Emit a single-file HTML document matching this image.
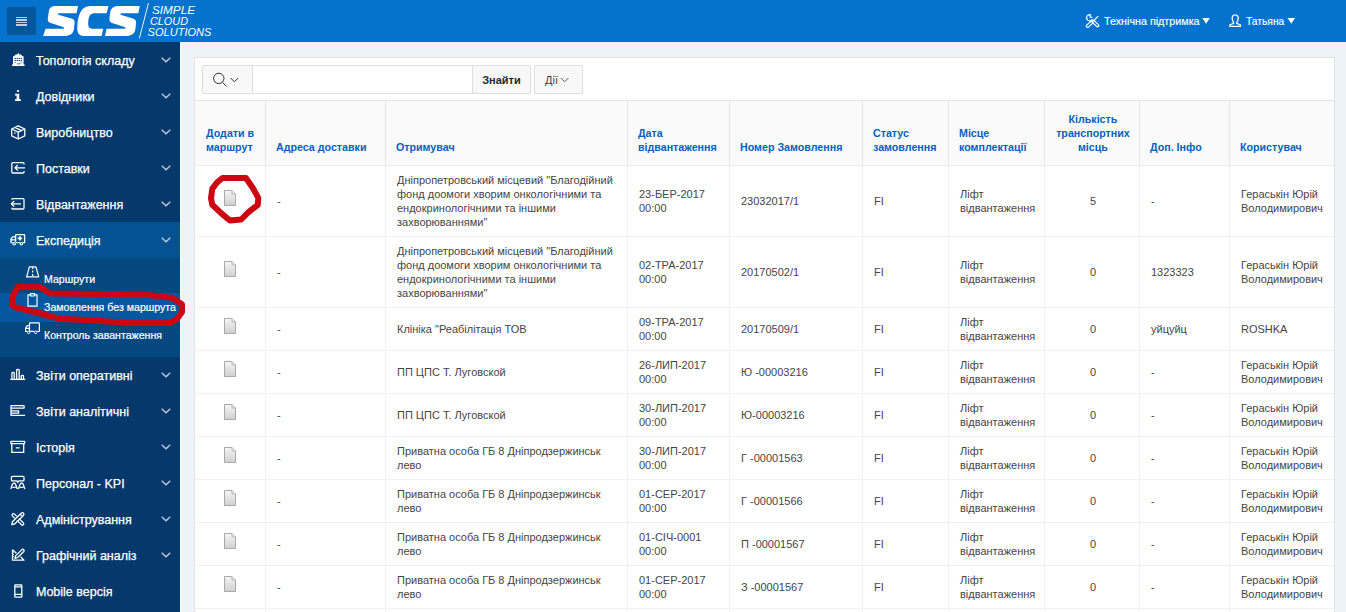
<!DOCTYPE html>
<html><head><meta charset="utf-8">
<style>
*{box-sizing:border-box;margin:0;padding:0}
html,body{width:1346px;height:612px;overflow:hidden;background:#eef3f8;font-family:"Liberation Sans",sans-serif;color:#404040}
#hdr{z-index:2;position:absolute;left:0;top:0;width:1346px;height:42px;background:#0572ce}
#burger{position:absolute;left:7px;top:7px;width:29px;height:28px;background:#04569f;border-radius:2px}
#burger i{position:absolute;left:9px;width:11px;height:1.5px;background:#bccfe3}
#logo{position:absolute;left:0;top:0}
.sx{display:inline-block;transform-origin:0 50%}
.tnav{position:absolute;top:0;height:42px;line-height:42px;color:#fff;font-size:11px;white-space:nowrap;-webkit-text-stroke:0.15px #fff}
#nav{position:absolute;left:0;top:0;width:180px;height:612px;background:#05386b}
#navline{position:absolute;left:180px;top:42px;width:1px;height:570px;background:#fafcfe}
.ni{position:absolute;left:0;width:180px;height:36px;color:#fff;font-size:12.5px;line-height:36px}
.ni .t{position:absolute;left:36px;top:1px;-webkit-text-stroke:0.25px #fff}
.ni svg.ic{position:absolute}
.chev{position:absolute;left:161px;top:15px}
#sub{position:absolute;left:0;top:258px;width:180px;height:99px;background:#04487f}
.si{position:absolute;left:0;width:180px;height:28px;color:#fff;font-size:11px}
.si .t{position:absolute;left:44px;top:7px;line-height:14px;font-size:10.6px;-webkit-text-stroke:0.2px #fff}
#card{position:absolute;left:194px;top:57px;width:1141px;height:560px;background:#fff;border:1px solid #e2e2e2}
.btn{position:absolute;top:7px;height:29px;background:#f8f8f8;border:1px solid #dedede}
table{position:absolute;left:0;top:42px;border-collapse:separate;border-spacing:0;table-layout:fixed;width:1139px}
th,td{border-right:1px solid #f0f0f0;border-bottom:1px solid #f0f0f0;vertical-align:middle;text-align:left;font-size:11px;line-height:14px;padding:0 10px}
th{border-right-color:#e6e6e6;border-bottom-color:#ebebeb;background:#fafafa;color:#0560c2;font-weight:bold;vertical-align:bottom;padding-bottom:11px;border-top:1px solid #e4e4e4}
td{color:#454545;padding-left:11px;padding-right:9px}
tr.r4 td{height:71px}
tr.r2 td{height:43px}
td.doc{text-align:center;padding:0}
tr > :last-child{border-right:none}
.h{display:inline-block;transform:scaleX(0.97);transform-origin:0 100%;white-space:nowrap}
th[style*="center"] .h{transform-origin:50% 100%}
.dic{display:inline-block;vertical-align:middle;margin-top:-5px;position:relative;top:-2px}
td{white-space:nowrap}
</style></head><body>
<div id="hdr">
  <div id="burger"><i style="top:9.5px"></i><i style="top:12px"></i><i style="top:14.5px"></i><i style="top:17px"></i></div>
  <svg id="logo" width="1346" height="42" viewBox="0 0 1346 42">
    <path fill="#fff" d="M54.3,6 L78,6 L76.6,13.2 L58.8,13.2 Q57.4,13.6 58.2,14.7 L72.3,18.8 Q75,20 74.6,23 L73.9,29.3 Q73.2,33.8 69.4,35 Q67.2,35.9 64.8,35.9 L43.1,35.9 L45.6,28.7 L63,28.7 Q64.5,28.3 63.8,27.2 L49.9,22.8 Q47.4,21.6 47.8,18.6 L48.7,11.9 Q49.4,7.6 52.4,6.6 Q53.4,6 54.3,6 Z"/>
    <path fill="#fff" d="M90.8,6 L108.5,6 L106.6,13.2 L94.5,13.2 C90.8,13.2 88.9,15.5 88.3,21 C87.8,26.5 89,28.7 92,28.7 L103.2,28.7 L101.6,35.9 L83.9,35.9 C78.6,35.9 76.9,32.5 77.3,26 C77.8,19 79.2,12.5 83,8.8 C85.2,6.8 87.6,6 90.8,6 Z"/>
    <path fill="#fff" d="M117.5,6 L139.8,6 L138.3,13.2 L121.4,13.2 Q119.9,13.7 120.6,14.7 L133.6,18.8 Q136.5,20.2 136.1,23.3 L135.2,30 Q134.5,33.8 131.1,34.9 Q128.8,35.9 126.2,35.9 L105,35.9 L106.6,28.7 L124.3,28.7 Q126,28.3 125.4,27.2 L111.3,22.8 Q109,21.6 109.4,18.6 L110.3,11.9 Q111,8 114.4,6.8 Q116,6 117.5,6 Z"/>
    <line x1="148.5" y1="3" x2="139.3" y2="38.5" stroke="#fff" stroke-width="0.9"/>
    <text x="152" y="14" font-family="Liberation Sans" font-style="italic" font-size="11" fill="#fff" textLength="43" lengthAdjust="spacingAndGlyphs">SIMPLE</text>
    <text x="150" y="25" font-family="Liberation Sans" font-style="italic" font-size="11" fill="#fff" textLength="38" lengthAdjust="spacingAndGlyphs">CLOUD</text>
    <text x="147.5" y="36" font-family="Liberation Sans" font-style="italic" font-size="11" fill="#fff" textLength="64" lengthAdjust="spacingAndGlyphs">SOLUTIONS</text>
    <g fill="none" stroke="#fff" stroke-width="1.2">
      <path d="M1098.2,16.2 L1093.6,20.8"/>
      <rect x="1085.6" y="22.85" width="8.2" height="2.6" rx="1.2" transform="rotate(-43 1089.7 24.15)"/>
      <rect x="1090.7" y="22.1" width="9" height="2.5" rx="1.25" transform="rotate(42 1095.2 23.35)"/>
      <path d="M1091.2,15.2 A3,3 0 1 0 1091.9,19.6"/>
      <path d="M1089.3,14.6 L1090.4,17.2 L1092.3,17.4"/>
    </g>
    <path fill="#fff" d="M1202.4,18 L1209.8,18 L1206.1,23.8 Z"/>
    <g fill="none" stroke="#fff" stroke-width="1.3">
      <path d="M1235.2,14.8 C1232.6,14.8 1232,17 1232.2,18.8 C1232.4,20.6 1233.2,21.8 1233.6,22.6 L1233.6,23.4 L1229.9,25 L1229.9,26.4 L1240.4,26.4 L1240.4,25 L1236.7,23.4 L1236.7,22.6 C1237.2,21.8 1238,20.6 1238.2,18.8 C1238.4,17 1237.8,14.8 1235.2,14.8 Z"/>
    </g>
    <path fill="#fff" d="M1287.5,18 L1295.1,18 L1291.3,23.8 Z"/>
  </svg>
  <div class="tnav" style="left:1103.5px"><span class="sx" style="transform:scaleX(0.977)">Технічна підтримка</span></div>
  <div class="tnav" style="left:1245.8px"><span class="sx" style="transform:scaleX(0.934)">Татьяна</span></div>
</div>

<div id="nav">
<div style="position:absolute;left:0;top:222px;width:180px;height:36px;background:#045292"></div>
<div id="sub"></div>
<div style="position:absolute;left:0;top:293px;width:180px;height:29px;background:#0558a0"></div>
<div class="ni" style="top:42px"><span class="t">Топологія складу</span><svg class="chev" width="10" height="6" viewBox="0 0 10 6"><polyline points="0.7,0.7 5,4.8 9.3,0.7" fill="none" stroke="#c3cfdc" stroke-width="1.3"/></svg></div>
<div class="ni" style="top:78px"><span class="t">Довідники</span><svg class="chev" width="10" height="6" viewBox="0 0 10 6"><polyline points="0.7,0.7 5,4.8 9.3,0.7" fill="none" stroke="#c3cfdc" stroke-width="1.3"/></svg></div>
<div class="ni" style="top:114px"><span class="t">Виробництво</span><svg class="chev" width="10" height="6" viewBox="0 0 10 6"><polyline points="0.7,0.7 5,4.8 9.3,0.7" fill="none" stroke="#c3cfdc" stroke-width="1.3"/></svg></div>
<div class="ni" style="top:150px"><span class="t">Поставки</span><svg class="chev" width="10" height="6" viewBox="0 0 10 6"><polyline points="0.7,0.7 5,4.8 9.3,0.7" fill="none" stroke="#c3cfdc" stroke-width="1.3"/></svg></div>
<div class="ni" style="top:186px"><span class="t">Відвантаження</span><svg class="chev" width="10" height="6" viewBox="0 0 10 6"><polyline points="0.7,0.7 5,4.8 9.3,0.7" fill="none" stroke="#c3cfdc" stroke-width="1.3"/></svg></div>
<div class="ni" style="top:222px"><span class="t">Експедиція</span><svg class="chev" width="10" height="6" viewBox="0 0 10 6"><polyline points="0.7,0.7 5,4.8 9.3,0.7" fill="none" stroke="#c3cfdc" stroke-width="1.3"/></svg></div>
<div class="ni" style="top:357px"><span class="t">Звіти оперативні</span><svg class="chev" width="10" height="6" viewBox="0 0 10 6"><polyline points="0.7,0.7 5,4.8 9.3,0.7" fill="none" stroke="#c3cfdc" stroke-width="1.3"/></svg></div>
<div class="ni" style="top:393px"><span class="t">Звіти аналітичні</span><svg class="chev" width="10" height="6" viewBox="0 0 10 6"><polyline points="0.7,0.7 5,4.8 9.3,0.7" fill="none" stroke="#c3cfdc" stroke-width="1.3"/></svg></div>
<div class="ni" style="top:429px"><span class="t">Історія</span><svg class="chev" width="10" height="6" viewBox="0 0 10 6"><polyline points="0.7,0.7 5,4.8 9.3,0.7" fill="none" stroke="#c3cfdc" stroke-width="1.3"/></svg></div>
<div class="ni" style="top:465px"><span class="t">Персонал - KPI</span><svg class="chev" width="10" height="6" viewBox="0 0 10 6"><polyline points="0.7,0.7 5,4.8 9.3,0.7" fill="none" stroke="#c3cfdc" stroke-width="1.3"/></svg></div>
<div class="ni" style="top:501px"><span class="t">Адміністрування</span><svg class="chev" width="10" height="6" viewBox="0 0 10 6"><polyline points="0.7,0.7 5,4.8 9.3,0.7" fill="none" stroke="#c3cfdc" stroke-width="1.3"/></svg></div>
<div class="ni" style="top:537px"><span class="t">Графічний аналіз</span><svg class="chev" width="10" height="6" viewBox="0 0 10 6"><polyline points="0.7,0.7 5,4.8 9.3,0.7" fill="none" stroke="#c3cfdc" stroke-width="1.3"/></svg></div>
<div class="ni" style="top:573px"><span class="t">Mobile версія</span></div>
<div class="si" style="top:265px"><span class="t">Маршрути</span></div>
<div class="si" style="top:293px"><span class="t">Замовлення без маршрута</span></div>
<div class="si" style="top:321px"><span class="t">Контроль завантаження</span></div>
</div>
<div id="navline"></div>

<div id="card">
  <div class="btn" style="left:7px;width:51px;border-radius:2px 0 0 2px"></div>
  <div class="btn" style="left:58px;width:220px;background:#fff;border-left:none"></div>
  <div class="btn" style="left:277px;width:59px;border-radius:0 2px 2px 0;font-weight:bold;font-size:11px;color:#262626;line-height:28px;text-align:center">Знайти</div>
  <div class="btn" style="left:339px;width:49px;border-radius:2px;font-size:11px;color:#404040;line-height:28px;padding-left:10px">Дії</div>
  <table>
    <colgroup><col style="width:71px"><col style="width:120px"><col style="width:242px"><col style="width:102px"><col style="width:133px"><col style="width:86px"><col style="width:96px"><col style="width:95px"><col style="width:90px"><col style="width:104px"></colgroup>
    <tr style="height:66px"><th style="padding-left:11px"><span class="h">Додати&nbsp;в<br>маршрут</span></th><th><span class="h">Адреса доставки</span></th><th><span class="h">Отримувач</span></th><th><span class="h">Дата<br>відвантаження</span></th><th><span class="h">Номер Замовлення</span></th><th><span class="h">Статус<br>замовлення</span></th><th><span class="h">Місце<br>комплектації</span></th><th style="text-align:center"><span class="h">Кількість<br>транспортних<br>місць</span></th><th><span class="h">Доп. Інфо</span></th><th><span class="h">Користувач</span></th></tr>
<tr class="r4"><td class="doc"><svg width="12" height="16" viewBox="0 0 12 16" class="dic"><defs><linearGradient id="dg" x1="0" y1="0" x2="0" y2="1"><stop offset="0" stop-color="#f6f6f6"/><stop offset="1" stop-color="#cfcfcf"/></linearGradient></defs><path d="M0.5,0.5 H8 L11.5,4 V15.5 H0.5 Z" fill="url(#dg)" stroke="#a9a9a9"/><path d="M8,0.5 V4 H11.5" fill="#e8e8e8" stroke="#b5b5b5"/></svg></td><td>-</td><td>Дніпропетровський місцевий "Благодійний<br>фонд доомоги хворим онкологічними та<br>ендокринологічними та іншими<br>захворюваннями"</td><td>23-БЕР-2017<br>00:00</td><td>23032017/1</td><td>FI</td><td>Ліфт<br>відвантаження</td><td style="text-align:center">5</td><td>-</td><td>Гераськін Юрій<br>Володимирович</td></tr>
<tr class="r4"><td class="doc"><svg width="12" height="16" viewBox="0 0 12 16" class="dic"><defs><linearGradient id="dg" x1="0" y1="0" x2="0" y2="1"><stop offset="0" stop-color="#f6f6f6"/><stop offset="1" stop-color="#cfcfcf"/></linearGradient></defs><path d="M0.5,0.5 H8 L11.5,4 V15.5 H0.5 Z" fill="url(#dg)" stroke="#a9a9a9"/><path d="M8,0.5 V4 H11.5" fill="#e8e8e8" stroke="#b5b5b5"/></svg></td><td>-</td><td>Дніпропетровський місцевий "Благодійний<br>фонд доомоги хворим онкологічними та<br>ендокринологічними та іншими<br>захворюваннями"</td><td>02-ТРА-2017<br>00:00</td><td>20170502/1</td><td>FI</td><td>Ліфт<br>відвантаження</td><td style="text-align:center">0</td><td>1323323</td><td>Гераськін Юрій<br>Володимирович</td></tr>
<tr class="r2"><td class="doc"><svg width="12" height="16" viewBox="0 0 12 16" class="dic"><defs><linearGradient id="dg" x1="0" y1="0" x2="0" y2="1"><stop offset="0" stop-color="#f6f6f6"/><stop offset="1" stop-color="#cfcfcf"/></linearGradient></defs><path d="M0.5,0.5 H8 L11.5,4 V15.5 H0.5 Z" fill="url(#dg)" stroke="#a9a9a9"/><path d="M8,0.5 V4 H11.5" fill="#e8e8e8" stroke="#b5b5b5"/></svg></td><td>-</td><td>Клініка "Реабілітація ТОВ</td><td>09-ТРА-2017<br>00:00</td><td>20170509/1</td><td>FI</td><td>Ліфт<br>відвантаження</td><td style="text-align:center">0</td><td>уйцуйц</td><td>ROSHKA</td></tr>
<tr class="r2"><td class="doc"><svg width="12" height="16" viewBox="0 0 12 16" class="dic"><defs><linearGradient id="dg" x1="0" y1="0" x2="0" y2="1"><stop offset="0" stop-color="#f6f6f6"/><stop offset="1" stop-color="#cfcfcf"/></linearGradient></defs><path d="M0.5,0.5 H8 L11.5,4 V15.5 H0.5 Z" fill="url(#dg)" stroke="#a9a9a9"/><path d="M8,0.5 V4 H11.5" fill="#e8e8e8" stroke="#b5b5b5"/></svg></td><td>-</td><td>ПП ЦПС Т. Луговской</td><td>26-ЛИП-2017<br>00:00</td><td>Ю -00003216</td><td>FI</td><td>Ліфт<br>відвантаження</td><td style="text-align:center">0</td><td>-</td><td>Гераськін Юрій<br>Володимирович</td></tr>
<tr class="r2"><td class="doc"><svg width="12" height="16" viewBox="0 0 12 16" class="dic"><defs><linearGradient id="dg" x1="0" y1="0" x2="0" y2="1"><stop offset="0" stop-color="#f6f6f6"/><stop offset="1" stop-color="#cfcfcf"/></linearGradient></defs><path d="M0.5,0.5 H8 L11.5,4 V15.5 H0.5 Z" fill="url(#dg)" stroke="#a9a9a9"/><path d="M8,0.5 V4 H11.5" fill="#e8e8e8" stroke="#b5b5b5"/></svg></td><td>-</td><td>ПП ЦПС Т. Луговской</td><td>30-ЛИП-2017<br>00:00</td><td>Ю-00003216</td><td>FI</td><td>Ліфт<br>відвантаження</td><td style="text-align:center">0</td><td>-</td><td>Гераськін Юрій<br>Володимирович</td></tr>
<tr class="r2"><td class="doc"><svg width="12" height="16" viewBox="0 0 12 16" class="dic"><defs><linearGradient id="dg" x1="0" y1="0" x2="0" y2="1"><stop offset="0" stop-color="#f6f6f6"/><stop offset="1" stop-color="#cfcfcf"/></linearGradient></defs><path d="M0.5,0.5 H8 L11.5,4 V15.5 H0.5 Z" fill="url(#dg)" stroke="#a9a9a9"/><path d="M8,0.5 V4 H11.5" fill="#e8e8e8" stroke="#b5b5b5"/></svg></td><td>-</td><td>Приватна особа ГБ 8 Дніпродзержинськ<br>лево</td><td>30-ЛИП-2017<br>00:00</td><td>Г -00001563</td><td>FI</td><td>Ліфт<br>відвантаження</td><td style="text-align:center">0</td><td>-</td><td>Гераськін Юрій<br>Володимирович</td></tr>
<tr class="r2"><td class="doc"><svg width="12" height="16" viewBox="0 0 12 16" class="dic"><defs><linearGradient id="dg" x1="0" y1="0" x2="0" y2="1"><stop offset="0" stop-color="#f6f6f6"/><stop offset="1" stop-color="#cfcfcf"/></linearGradient></defs><path d="M0.5,0.5 H8 L11.5,4 V15.5 H0.5 Z" fill="url(#dg)" stroke="#a9a9a9"/><path d="M8,0.5 V4 H11.5" fill="#e8e8e8" stroke="#b5b5b5"/></svg></td><td>-</td><td>Приватна особа ГБ 8 Дніпродзержинськ<br>лево</td><td>01-СЕР-2017<br>00:00</td><td>Г -00001566</td><td>FI</td><td>Ліфт<br>відвантаження</td><td style="text-align:center">0</td><td>-</td><td>Гераськін Юрій<br>Володимирович</td></tr>
<tr class="r2"><td class="doc"><svg width="12" height="16" viewBox="0 0 12 16" class="dic"><defs><linearGradient id="dg" x1="0" y1="0" x2="0" y2="1"><stop offset="0" stop-color="#f6f6f6"/><stop offset="1" stop-color="#cfcfcf"/></linearGradient></defs><path d="M0.5,0.5 H8 L11.5,4 V15.5 H0.5 Z" fill="url(#dg)" stroke="#a9a9a9"/><path d="M8,0.5 V4 H11.5" fill="#e8e8e8" stroke="#b5b5b5"/></svg></td><td>-</td><td>Приватна особа ГБ 8 Дніпродзержинськ<br>лево</td><td>01-СІЧ-0001<br>00:00</td><td>П -00001567</td><td>FI</td><td>Ліфт<br>відвантаження</td><td style="text-align:center">0</td><td>-</td><td>Гераськін Юрій<br>Володимирович</td></tr>
<tr class="r2"><td class="doc"><svg width="12" height="16" viewBox="0 0 12 16" class="dic"><defs><linearGradient id="dg" x1="0" y1="0" x2="0" y2="1"><stop offset="0" stop-color="#f6f6f6"/><stop offset="1" stop-color="#cfcfcf"/></linearGradient></defs><path d="M0.5,0.5 H8 L11.5,4 V15.5 H0.5 Z" fill="url(#dg)" stroke="#a9a9a9"/><path d="M8,0.5 V4 H11.5" fill="#e8e8e8" stroke="#b5b5b5"/></svg></td><td>-</td><td>Приватна особа ГБ 8 Дніпродзержинськ<br>лево</td><td>01-СЕР-2017<br>00:00</td><td>З -00001567</td><td>FI</td><td>Ліфт<br>відвантаження</td><td style="text-align:center">0</td><td>-</td><td>Гераськін Юрій<br>Володимирович</td></tr>
<tr class="r2"><td class="doc"><svg width="12" height="16" viewBox="0 0 12 16" class="dic"><defs><linearGradient id="dg" x1="0" y1="0" x2="0" y2="1"><stop offset="0" stop-color="#f6f6f6"/><stop offset="1" stop-color="#cfcfcf"/></linearGradient></defs><path d="M0.5,0.5 H8 L11.5,4 V15.5 H0.5 Z" fill="url(#dg)" stroke="#a9a9a9"/><path d="M8,0.5 V4 H11.5" fill="#e8e8e8" stroke="#b5b5b5"/></svg></td><td>-</td><td>Приватна особа ГБ 8 Дніпродзержинськ<br>лево</td><td>01-СЕР-2017<br>00:00</td><td>З -00001567</td><td>FI</td><td>Ліфт<br>відвантаження</td><td style="text-align:center">0</td><td>-</td><td>Гераськін Юрій<br>Володимирович</td></tr>
  </table>
</div>
<svg id="ov" width="1346" height="612" viewBox="0 0 1346 612" style="position:absolute;left:0;top:0;z-index:5">
  <!-- search bar icons -->
  <g fill="none" stroke="#303030" stroke-width="1">
    <circle cx="218.8" cy="78.4" r="5.2"/>
    <path d="M222.5,82.4 L226.6,86.5"/>
    <polyline points="230.6,78 234.4,81.8 238.2,78"/>
    <polyline points="560.8,78 564.6,81.8 568.4,78" stroke="#555"/>
  </g>
  <!-- sidebar icons -->
  <g fill="#fff" stroke="none">
    <!-- building -->
    <path d="M12,64.4 H24.6 V66 H12 Z M13,56.3 H23.6 V64.4 H13 Z M14.2,56.3 L15.6,54.6 L17.2,54.6 L18.3,52.7 L19.4,54.6 L21,54.6 L22.4,56.3 Z"/>
  </g>
  <g fill="#05386b">
    <rect x="14.6" y="58" width="1.3" height="1.1"/><rect x="16.6" y="58" width="1.3" height="1.1"/><rect x="18.6" y="58" width="1.3" height="1.1"/><rect x="20.6" y="58" width="1.3" height="1.1"/>
    <rect x="14.6" y="60" width="1.3" height="1.1"/><rect x="16.6" y="60" width="1.3" height="1.1"/><rect x="18.6" y="60" width="1.3" height="1.1"/><rect x="20.6" y="60" width="1.3" height="1.1"/>
    <rect x="14.6" y="62" width="1.3" height="1" opacity="0.5"/><rect x="20.6" y="62" width="1.3" height="1" opacity="0.5"/>
    <rect x="17.3" y="63.2" width="1.1" height="1.2"/><rect x="19.2" y="63.2" width="1.1" height="1.2"/>
  </g>
  <g fill="#fff">
    <!-- info i -->
    <rect x="16.8" y="90" width="2.4" height="2.1" rx="1"/>
    <path d="M15,93.8 H19.3 V99.2 H20.9 V101 H15 V99.2 H16.6 V95.5 H15 Z"/>
  </g>
  <g fill="none" stroke="#fff" stroke-width="1.3" stroke-linejoin="round">
    <!-- box -->
    <path d="M18.2,125.8 L24.8,129 V135.8 L18.2,139 L11.7,135.8 V129 Z M11.7,129 L18.2,132.2 L24.8,129 M18.2,132.2 V139 M15,127.4 L21.5,130.6 M14.3,132.8 L15.5,133.3"/>
    <!-- sign in (Поставки) -->
    <path d="M24,164.6 V163.6 Q24,162.6 23,162.6 H12.8 Q11.8,162.6 11.8,163.6 V172 Q11.8,173 12.8,173 H23 Q24,173 24,172 V171 M15,167.8 H25 M17.8,165 L15,167.8 L17.8,170.6"/>
    <!-- sign out (Відвантаження) -->
    <path d="M11.8,199.8 Q11.8,198.6 12.8,198.6 H23 Q24,198.6 24,199.6 V208 Q24,209 23,209 H12.8 Q11.8,209 11.8,207.8 M11.4,203.8 H21 M14.2,201 L11.4,203.8 L14.2,206.6"/>
    <!-- ambulance -->
    <path d="M15.6,241.8 V235.2 Q15.6,234.6 16.2,234.6 H24 Q24.6,234.6 24.6,235.2 V242.6 H22.8 M19.8,242.6 H15.8 M12.6,242.6 H11 V238.8 L12.6,236.8 H15.6 M11,239.8 H15.6"/>
    <circle cx="14.2" cy="243.7" r="1.25" stroke-width="1.1"/><circle cx="21.3" cy="243.7" r="1.25" stroke-width="1.1"/>
    <path d="M19.9,236.2 V240.6 M17.7,238.4 H22.1" stroke-width="1.6"/>
  </g>
  <g fill="none" stroke="#fff" stroke-width="1.2" stroke-linejoin="round">
    <!-- road -->
    <path d="M29.4,266.8 H35.9 L38.8,276.9 H26.6 Z M32.7,267.5 V269 M32.7,270.5 V272.5 M32.7,274 V276"/>
    <!-- clipboard -->
    <path d="M30.6,294.8 H28 V306.2 H37 V294.8 H34.4 M30.6,293.6 H34.4 V296 H30.6 Z"/>
    <!-- truck -->
    <path d="M29.5,331.2 V323.6 Q29.5,322.8 30.3,322.8 H38.6 Q39.4,322.8 39.4,323.6 V331.4 H37.2 M34.2,331.4 H30.2 M27.2,331.4 H25.6 V328 L27.2,325.6 H29.5 M25.6,328.4 H29.5"/>
    <circle cx="28.7" cy="332.3" r="1.3" stroke-width="1"/><circle cx="35.7" cy="332.3" r="1.3" stroke-width="1"/>
  </g>
  <g fill="none" stroke="#fff" stroke-width="1.3" stroke-linejoin="round">
    <!-- bar chart -->
    <path d="M10.3,379.4 H25.2"/>
    <path d="M11.9,378.9 V373 Q11.9,372.4 13,372.4 Q14.2,372.4 14.2,373 V378.9 M16.6,378.9 V370 Q16.6,369.4 17.9,369.4 Q19.2,369.4 19.2,370 V378.9 M21.3,378.9 V375.9 Q21.3,375.3 22.4,375.3 Q23.5,375.3 23.5,375.9 V378.9"/>
    <!-- analytic -->
    <path d="M23.9,405.6 H11 V415.3 H25.1 M11,408.2 H23.9 Q24.6,406.9 23.9,405.6 M11,410.9 H18.6 V413.2 H11"/>
    <!-- archive -->
    <path d="M10.9,441.4 H24.6 V443.7 H10.9 Z M11.8,443.7 V452.4 H23.7 V443.7 M15.8,447.8 H19.7"/>
    <!-- personal -->
    <path d="M12.3,476.4 H23.2 Q24,476.4 24,477.3 V480 Q24,480.9 23.2,480.9 H18.8 L17.7,482.4 L16.9,480.9 H12.3 Q11.4,480.9 11.4,480 V477.3 Q11.4,476.4 12.3,476.4 Z"/>
    <path d="M10.8,489 L12.4,484.3 Q13.2,483 14,483 Q14.9,483 15.6,484.3 L17.2,489 M18.4,489 L20,484.3 Q20.8,483 21.6,483 Q22.5,483 23.2,484.3 L24.8,489 M12.3,487.3 H15.7 M19.9,487.3 H23.3"/>
    <!-- admin pencil ruler -->
    <path d="M11.8,524.6 L12.4,521.8 L21.4,513 Q22.5,512.2 23.5,513.2 Q24.4,514.2 23.6,515.2 L14.6,524 Z M20.2,514.2 L22.4,516.4"/>
    <path d="M14.8,518.4 L12.3,515.9 Q11.6,514.9 12.5,514 Q13.4,513.2 14.3,513.9 L16.8,516.4 M19,518.6 L23.5,523 Q24.2,524 23.3,524.8 Q22.4,525.6 21.5,524.8 L17,520.4"/>
    <!-- graphic: triangle ruler + pencil -->
    <path d="M12.5,549.6 V560.2 H24 L20.6,556.6 M12.5,549.6 L16.4,553.3"/>
    <path d="M12.5,552.2 H13.9 M12.5,554.4 H13.9 M12.5,556.6 H13.9" stroke-width="1"/>
    <path d="M15,558.3 L15.7,555.6 L21.9,549.6 Q22.9,548.8 23.8,549.7 Q24.6,550.6 23.8,551.5 L17.6,557.5 Z"/>
    <!-- mobile -->
    <path d="M15.4,584.8 H21.2 Q21.8,584.8 21.8,585.5 V596.6 Q21.8,597.2 21.2,597.2 H15.4 Q14.8,597.2 14.8,596.6 V585.5 Q14.8,584.8 15.4,584.8 Z M14.8,586.8 H21.8 M14.8,594.4 H21.8"/>
  </g>
  <!-- red marks -->
  <g fill="none" stroke="#cc0712" stroke-width="6" stroke-linejoin="round" stroke-linecap="round">
    <path d="M222.5,178 L245.9,178 L252.5,187.5 L258.3,197.9 L257.8,204.8 L248.5,212.2 L241.2,219.5 L229.9,220.5 L221.1,213.1 L212.3,204.8 L211,198.4 L212.3,188.6 L217.2,182.3 Z"/>
    <path d="M18,287 L40,287 L50,293.5 L96,294 L145,294.5 L173,298 L182,304.5 L182,312 L177,319 L170,323 L125,323 L96,320.5 L59,318.7 L39,313 L16,307.5 L12,305 L12,297.5 Z"/>
  </g>
</svg>
</body></html>
